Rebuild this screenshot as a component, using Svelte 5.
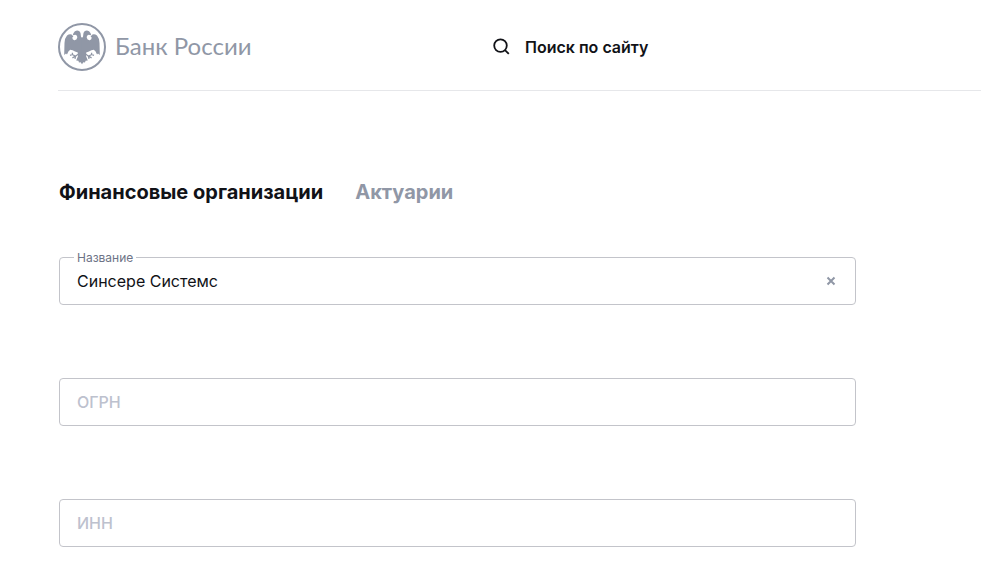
<script>
  let name = $state('Синсере Системс');
  let ogrn = $state('');
  let inn = $state('');
</script>

<header>
  <a class="logo" href="/" aria-label="Банк России">
    <svg width="48" height="48" viewBox="0 0 48 48" aria-hidden="true">
      <defs>
        <g id="half">
          <path fill="currentColor" d="M24.2 15L23 13.8L22.6 10.6Q22 7.8 19 7.6Q16.6 7.8 15.4 10.2L14.8 12.2L17.4 11.7Q19.6 12 19.3 14.6Q18.8 17.4 16.2 17.2Q14.2 16.6 14.3 14.6L15.4 13.6L13.6 11.6Q11.4 10.6 9 12.6Q6.8 15 6.5 20L6.2 32L8 30.6L9 31.4L10.4 28.6L12.2 26.8L14.6 27.2L17 28.4L19.8 29.5L20 33L18.2 37.4L20.4 37.8L21 39.6L22.6 39.2L24.2 41.2Z" />
          <path fill="none" stroke="currentColor" stroke-width="1.3" d="M20.4 31L17.5 33.2L14.4 31.4L12 32.4M14.4 31.4L14.4 29.8M17.5 33.2L14.4 34.8M17.5 33.2L17 35.8" />
        </g>
      </defs>
      <circle cx="24" cy="24" r="23" fill="#fff" stroke="currentColor" stroke-width="2" />
      <use href="#half" />
      <use href="#half" transform="translate(48 0) scale(-1 1)" />
    </svg>
    <span>Банк России</span>
  </a>
  <button class="search" type="button">
    <svg width="18" height="18" viewBox="0 0 18 18" fill="none" stroke="currentColor" stroke-width="1.8" aria-hidden="true">
      <circle cx="7.5" cy="7.6" r="6.3" />
      <path d="M12 12.1L15.8 15.9" />
    </svg>
    Поиск по сайту
  </button>
</header>

<main>
  <nav>
    <a class="active" href="#organizations">Финансовые организации</a>
    <a href="#actuaries">Актуарии</a>
  </nav>
  <form>
    <div class="field">
      <label for="name">Название</label>
      <input id="name" type="text" bind:value={name} />
      <button class="clear" type="button" aria-label="Очистить" onclick={() => (name = '')}>
        <svg width="10" height="10" viewBox="0 0 10 10" fill="none" stroke="currentColor" stroke-width="2" aria-hidden="true">
          <path d="M1.5 1.5L8.5 8.5M8.5 1.5L1.5 8.5" />
        </svg>
      </button>
    </div>
    <div class="field"><input type="text" placeholder="ОГРН" aria-label="ОГРН" bind:value={ogrn} /></div>
    <div class="field"><input type="text" placeholder="ИНН" aria-label="ИНН" bind:value={inn} /></div>
  </form>
</main>

<style>
  :global(body) {
    margin: 0;
    background: #fff;
    color: #111217;
    font-family: Inter, "Noto Sans", sans-serif;
  }
  header {
    display: grid;
    grid-template-columns: 435px 1fr;
    align-items: center;
    margin-left: 58px;
    padding: 23px 0 19px;
    border-bottom: 1px solid #e6e7ea;
  }
  a {
    color: #9097a6;
    text-decoration: none;
  }
  .logo {
    display: flex;
    align-items: center;
    gap: 9px;
    font: 24px/44px Lato, sans-serif;
  }
  .logo span {
    padding-bottom: 2px;
  }
  button {
    border: 0;
    padding: 0;
    background: none;
    color: inherit;
    cursor: pointer;
  }
  .search {
    display: flex;
    align-items: center;
    justify-self: start;
    gap: 14px;
    font: 600 16px/24px Inter, sans-serif;
  }
  main {
    padding: 89px 125px 39px 59px;
  }
  nav {
    display: flex;
    gap: 32px;
    font-size: 20px;
    line-height: 24px;
    font-weight: 700;
  }
  nav .active {
    color: #111217;
  }
  form {
    display: grid;
    gap: 73px;
    margin-top: 53px;
  }
  .field {
    position: relative;
  }
  input {
    display: block;
    box-sizing: border-box;
    width: 100%;
    height: 48px;
    padding: 0 48px 0 17px;
    border: 1px solid #c3c4ca;
    border-radius: 4px;
    background: #fff;
    color: #111217;
    font: 16px/24px Inter, sans-serif;
    outline: 0;
  }
  input::placeholder {
    color: #bdc1ce;
    font-weight: 500;
    opacity: 1;
  }
  label {
    position: absolute;
    top: -7px;
    left: 15px;
    padding: 0 3px;
    background: #fff;
    color: #6d7386;
    font-size: 12px;
    line-height: 16px;
  }
  .clear {
    position: absolute;
    top: 12px;
    right: 13px;
    display: grid;
    place-items: center;
    width: 24px;
    height: 24px;
    color: #9097a6;
  }
</style>
